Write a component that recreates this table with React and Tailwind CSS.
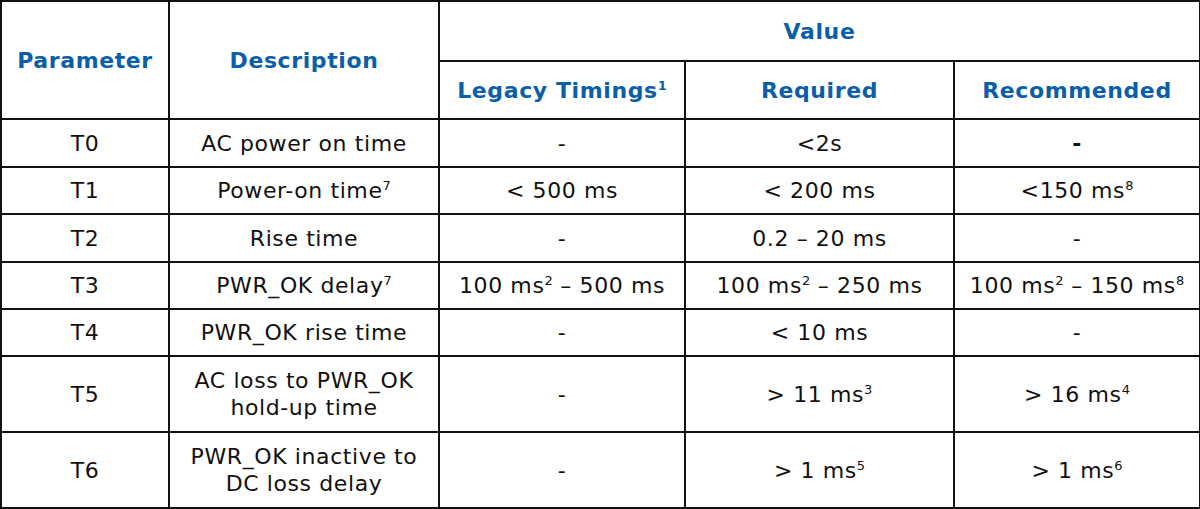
const FONT = { fontFamily: '"DejaVu Sans", Verdana, sans-serif' }

const Sup = ({ children, bold }) => (
  <sup className={`text-[13px] relative -top-[8px] tracking-normal ${bold ? 'font-bold' : 'font-normal'}`}>{children}</sup>
)

const ROWS = [
  { p: 'T0', d: 'AC power on time', l: '-', r: '<2s', rec: <span className="font-bold">-</span>, h: 'h-[48px]' },
  { p: 'T1', d: <>Power-on time<Sup>7</Sup></>, l: '< 500 ms', r: '< 200 ms', rec: <>&lt;150 ms<Sup>8</Sup></>, h: 'h-[47px]' },
  { p: 'T2', d: 'Rise time', l: '-', r: '0.2 – 20 ms', rec: '-', h: 'h-[48px]' },
  {
    p: 'T3',
    d: <>PWR_OK delay<Sup>7</Sup></>,
    l: <>100 ms<Sup>2</Sup> – 500 ms</>,
    r: <>100 ms<Sup>2</Sup> – 250 ms</>,
    rec: <>100 ms<Sup>2</Sup> – 150 ms<Sup>8</Sup></>,
    h: 'h-[47px]',
  },
  { p: 'T4', d: 'PWR_OK rise time', l: '-', r: '< 10 ms', rec: '-', h: 'h-[47px]' },
  {
    p: 'T5',
    d: <>AC loss to PWR_OK<br />hold-up time</>,
    l: '-',
    r: <>&gt; 11 ms<Sup>3</Sup></>,
    rec: <>&gt; 16 ms<Sup>4</Sup></>,
    h: 'h-[76px]',
  },
  {
    p: 'T6',
    d: <>PWR_OK inactive to<br />DC loss delay</>,
    l: '-',
    r: <>&gt; 1 ms<Sup>5</Sup></>,
    rec: <>&gt; 1 ms<Sup>6</Sup></>,
    h: 'h-[76px]',
  },
]

const cell = 'border-2 border-[#111] text-center align-middle p-0'
const head = `${cell} text-[#0b5ea8] font-bold`

export default function App() {
  return (
    <div className="w-[1200px] h-[509px] bg-white overflow-hidden" style={FONT}>
      <table className="w-[1199px] border-collapse table-fixed text-[22px] leading-[27px] tracking-[0.6px] text-[#111]">
        <colgroup>
          <col className="w-[168px]" />
          <col className="w-[270px]" />
          <col className="w-[246px]" />
          <col className="w-[269px]" />
          <col className="w-[246px]" />
        </colgroup>
        <thead>
          <tr className="h-[60px]">
            <th rowSpan={2} className={head}>Parameter</th>
            <th rowSpan={2} className={head}>Description</th>
            <th colSpan={3} className={head}>Value</th>
          </tr>
          <tr className="h-[58px]">
            <th className={head}>
              Legacy Timings<Sup bold>1</Sup>
            </th>
            <th className={head}>Required</th>
            <th className={head}>Recommended</th>
          </tr>
        </thead>
        <tbody>
          {ROWS.map((row) => (
            <tr key={row.p} className={row.h}>
              <td className={cell}>{row.p}</td>
              <td className={cell}>{row.d}</td>
              <td className={cell}>{row.l}</td>
              <td className={cell}>{row.r}</td>
              <td className={cell}>{row.rec}</td>
            </tr>
          ))}
        </tbody>
      </table>
    </div>
  )
}
